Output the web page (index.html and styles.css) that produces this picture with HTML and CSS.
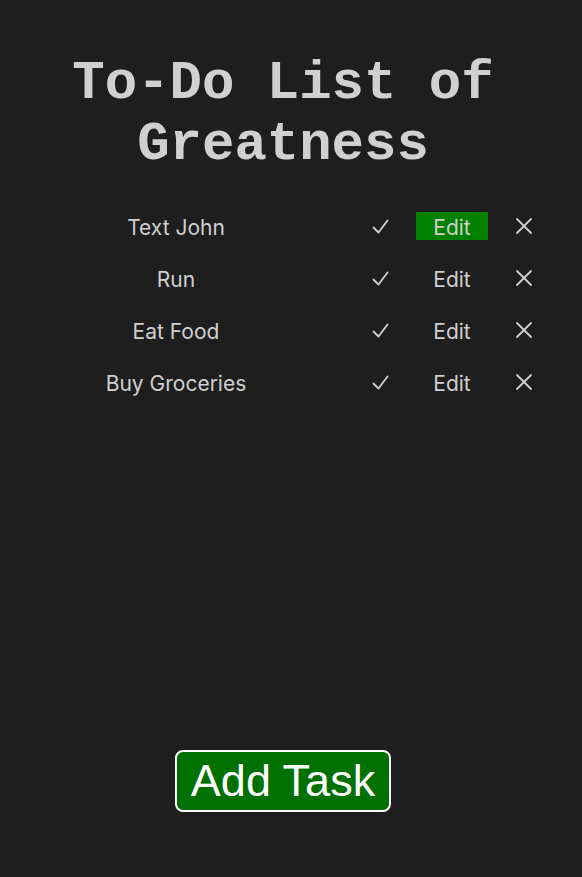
FILE: index.html
```html
<!DOCTYPE html>
<html>
<head>
<meta charset="utf-8">
<link rel="stylesheet" href="styles.css">
</head>
<body>
<div class="app">
  <h1 class="title">To-Do List of Greatness</h1>
  <div class="list">
    <div class="row">
      <span class="name">Text John</span>
      <span class="act"><svg class="icon" viewBox="0 0 18 18"><path d="M2.5 10.5 L7.5 15.5 L16.5 3.5"/></svg></span>
      <span class="edit active">Edit</span>
      <span class="act"><svg class="icon" viewBox="0 0 18 18"><path d="M2 2 L16 16 M16 2 L2 16"/></svg></span>
    </div>
    <div class="row">
      <span class="name">Run</span>
      <span class="act"><svg class="icon" viewBox="0 0 18 18"><path d="M2.5 10.5 L7.5 15.5 L16.5 3.5"/></svg></span>
      <span class="edit">Edit</span>
      <span class="act"><svg class="icon" viewBox="0 0 18 18"><path d="M2 2 L16 16 M16 2 L2 16"/></svg></span>
    </div>
    <div class="row">
      <span class="name">Eat Food</span>
      <span class="act"><svg class="icon" viewBox="0 0 18 18"><path d="M2.5 10.5 L7.5 15.5 L16.5 3.5"/></svg></span>
      <span class="edit">Edit</span>
      <span class="act"><svg class="icon" viewBox="0 0 18 18"><path d="M2 2 L16 16 M16 2 L2 16"/></svg></span>
    </div>
    <div class="row">
      <span class="name">Buy Groceries</span>
      <span class="act"><svg class="icon" viewBox="0 0 18 18"><path d="M2.5 10.5 L7.5 15.5 L16.5 3.5"/></svg></span>
      <span class="edit">Edit</span>
      <span class="act"><svg class="icon" viewBox="0 0 18 18"><path d="M2 2 L16 16 M16 2 L2 16"/></svg></span>
    </div>
  </div>
  <div class="footer">
    <button class="add">Add Task</button>
  </div>
</div>
</body>
</html>
```
FILE: styles.css
```css
html, body {
  margin: 0;
  padding: 0;
  background: #1e1e1e;
}
.app {
  width: 566px;
  height: 877px;
  display: flex;
  flex-direction: column;
  color: #d0d0d0;
  font-family: Inter, "Noto Sans", sans-serif;
}
.title {
  margin: 53px 0 0 0;
  font-family: "Liberation Mono", monospace;
  font-weight: bold;
  font-size: 54px;
  line-height: 61px;
  text-align: center;
  color: #d0d0d0;
}
.list {
  margin-top: 37px;
  padding: 0 6px 0 8px;
  display: flex;
  flex-direction: column;
  gap: 24px;
}
.row {
  display: grid;
  grid-template-columns: 336px 72px 72px 72px;
  height: 28px;
  align-items: center;
  font-size: 21px;
}
.name {
  text-align: center;
  height: 28px;
  line-height: 28px;
  padding-top: 2px;
  box-sizing: border-box;
}
.edit {
  height: 28px;
  line-height: 25px;
  padding-top: 3px;
  box-sizing: border-box;
  text-align: center;
}
.act {
  height: 28px;
  display: flex;
  align-items: center;
  justify-content: center;
}
.icon {
  width: 18px;
  height: 18px;
  fill: none;
  stroke: #d0d0d0;
  stroke-width: 1.8;
  stroke-linecap: round;
  stroke-linejoin: round;
}
.edit.active {
  background: #008000;
}
.footer {
  margin-top: auto;
  margin-bottom: 65px;
  display: flex;
  justify-content: center;
}
.add {
  font-family: "Liberation Sans", Arial, sans-serif;
  font-size: 45px;
  line-height: 52px;
  color: #ffffff;
  background: #007000;
  border: 2px solid #ffffff;
  border-radius: 8px;
  padding: 3px 14px;
}
```
